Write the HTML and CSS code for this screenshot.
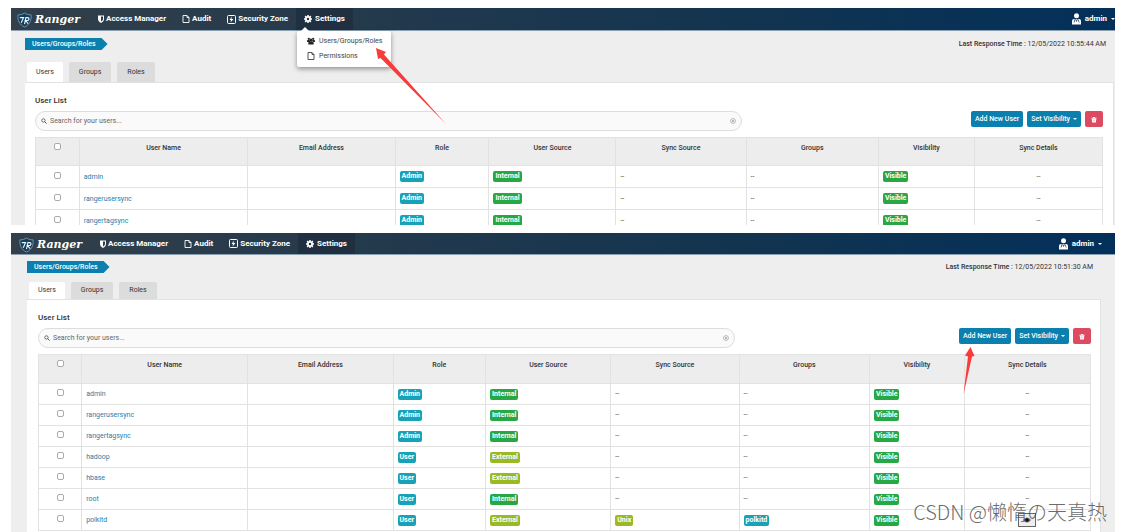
FILE: index.html
```html
<!DOCTYPE html>
<html lang="en">
<head>
<meta charset="utf-8">
<title>Ranger - Users/Groups/Roles</title>
<link rel="stylesheet" href="styles.css">
</head>
<body>
<svg class="sprite" aria-hidden="true">
  <symbol id="logo" viewBox="0 0 32 32">
    <path d="M16 1C12 4 7 5 2 5c-1 12 3 21 14 26C27 26 31 17 30 5c-5 0-10-1-14-4z" fill="#123f5e" stroke="#6f98b3" stroke-width="2"/>
    <path d="M6 11h8l-5 11M16 25l3-14h4c4 0 3 6-1 6h-4l6 7" fill="none" stroke="#eef4f8" stroke-width="2.4"/>
  </symbol>
  <symbol id="shield" viewBox="0 0 12 16">
    <path d="M0 1h12v7c0 4-3 6-6 8-3-2-6-4-6-8z" fill="#fff"/><path d="M6 3h4v5c0 2-2 4-4 5z" fill="#2c3d4b"/>
  </symbol>
  <symbol id="file" viewBox="0 0 16 16">
    <path d="M2 1h8l4 4v10H2zM10 1v4h4" fill="none" stroke="currentColor" stroke-width="1.8"/>
  </symbol>
  <symbol id="zone" viewBox="0 0 18 18">
    <rect x="1" y="1" width="16" height="16" rx="2" fill="none" stroke="#fff" stroke-width="2"/><path d="M10 3 5 10h3l-1 5 6-7h-4z" fill="#fff"/>
  </symbol>
  <symbol id="gear" viewBox="0 0 16 16">
    <circle cx="8" cy="8" r="4.2" fill="none" stroke="#fff" stroke-width="3.6"/>
    <path d="M8 0v3M8 13v3M0 8h3M13 8h3M2.3 2.3l2 2M11.7 11.7l2 2M2.3 13.7l2-2M11.7 4.3l2-2" stroke="#fff" stroke-width="3"/>
  </symbol>
  <symbol id="group" viewBox="0 0 18 16">
    <circle cx="4" cy="3" r="2.500"/><circle cx="14" cy="3" r="2.500"/><circle cx="9" cy="6" r="3.500"/>
    <path d="M0 10V7q0-1 2-1h4l1 4zM18 10V7q0-1-2-1h-4l-1 4zM3 16v-4q0-3 3-3h6q3 0 3 3v4z"/>
  </symbol>
  <symbol id="user" viewBox="0 0 18 24">
    <circle cx="9" cy="5.500" r="5" fill="#fff"/><path d="M0 23v-7q0-4 4-4h10q4 0 4 4v7z" fill="#fff"/>
    <path d="M5 13v3l-1 3M12.500 13l1 4 1 2M7 12l2 5 2-5" stroke="#0a3154" stroke-width="1.400" fill="none"/>
  </symbol>
  <symbol id="search" viewBox="0 0 16 16">
    <circle cx="6.500" cy="6.500" r="4.500" fill="none" stroke="#555" stroke-width="2.200"/><path d="m10 10 5 5" stroke="#555" stroke-width="2.600"/>
  </symbol>
  <symbol id="clear" viewBox="0 0 16 16">
    <circle cx="8" cy="8" r="6.500" fill="none" stroke="#999" stroke-width="1.800"/><path d="m5.500 5.500 5 5m0-5-5 5" stroke="#999" stroke-width="2"/>
  </symbol>
  <symbol id="trash" viewBox="0 0 16 16">
    <path d="M1 3h4l1-2h4l1 2h4v2H1zM2 6h12l-1 10H3z" fill="#fff"/><path d="M6 8v5M10 8v5" stroke="#dd4b62"/>
  </symbol>
  <symbol id="eye" viewBox="0 0 16 12">
    <path d="M0 6q8-10 16 0-8 10-16 0z" fill="#666"/><circle cx="8" cy="6" r="3.500" fill="#111"/>
  </symbol>
</svg>

<main class="page">
  <section class="shot shot-menu">
    <header class="nav">
      <a class="brand" href="#"><svg class="logo"><use href="#logo"/></svg>Ranger</a>
      <a class="nav-item" href="#"><svg class="i-shield"><use href="#shield"/></svg>Access Manager</a>
      <a class="nav-item" href="#"><svg class="i-nav"><use href="#file"/></svg>Audit</a>
      <a class="nav-item" href="#"><svg class="i-zone"><use href="#zone"/></svg>Security Zone</a>
      <div class="nav-drop">
        <button class="nav-item active" type="button"><svg class="i-nav"><use href="#gear"/></svg>Settings</button>
        <div class="menu">
          <a href="#"><svg class="i-menu"><use href="#group"/></svg>Users/Groups/Roles</a>
          <a href="#"><svg class="i-menu"><use href="#file"/></svg>Permissions</a>
          <svg class="arrow arrow-menu" viewBox="0 0 72 78"><path d="M1 1 11 5 9 7.500 71 77 5.500 11 3 12z" fill="#f93c3a"/></svg>
        </div>
      </div>
      <button class="account" type="button"><svg class="i-user"><use href="#user"/></svg>admin<span class="caret"></span></button>
    </header>
    <div class="content">
      <div class="topline">
        <a class="crumb" href="#">Users/Groups/Roles</a>
        <p class="stamp"><b>Last Response Time :</b> 12/05/2022 10:55:44 AM</p>
      </div>
      <nav class="tabs"><a class="tab current" href="#">Users</a><a class="tab" href="#">Groups</a><a class="tab" href="#">Roles</a></nav>
      <div class="panel">
        <h1>User List</h1>
        <div class="tools">
          <label class="search"><svg class="i-search"><use href="#search"/></svg><input type="text" placeholder="Search for your users..." aria-label="Search users"><svg class="i-search"><use href="#clear"/></svg></label>
          <div class="actions">
            <button class="btn" type="button">Add New User</button>
            <button class="btn" type="button">Set Visibility<span class="caret"></span></button>
            <button class="btn danger" type="button" aria-label="Delete"><svg class="i-trash"><use href="#trash"/></svg></button>
          </div>
        </div>
        <table>
          <colgroup><col class="c1"><col class="c2"><col class="c3"><col class="c4"><col class="c5"><col class="c6"><col class="c7"><col class="c8"><col class="c9"></colgroup>
          <thead><tr><th><input type="checkbox" aria-label="Select all"></th><th>User Name</th><th>Email Address</th><th>Role</th><th>User Source</th><th>Sync Source</th><th>Groups</th><th>Visibility</th><th>Sync Details</th></tr></thead>
          <tbody>
            <tr><td><input type="checkbox" aria-label="admin"></td><td><a href="#">admin</a></td><td></td><td><span class="badge info">Admin</span></td><td><span class="badge ok">Internal</span></td><td>--</td><td>--</td><td><span class="badge ok">Visible</span></td><td>--</td></tr>
            <tr><td><input type="checkbox" aria-label="rangerusersync"></td><td><a href="#">rangerusersync</a></td><td></td><td><span class="badge info">Admin</span></td><td><span class="badge ok">Internal</span></td><td>--</td><td>--</td><td><span class="badge ok">Visible</span></td><td>--</td></tr>
            <tr><td><input type="checkbox" aria-label="rangertagsync"></td><td><a href="#">rangertagsync</a></td><td></td><td><span class="badge info">Admin</span></td><td><span class="badge ok">Internal</span></td><td>--</td><td>--</td><td><span class="badge ok">Visible</span></td><td>--</td></tr>
          </tbody>
        </table>
      </div>
    </div>
  </section>

  <section class="shot shot-list">
    <header class="nav">
      <a class="brand" href="#"><svg class="logo"><use href="#logo"/></svg>Ranger</a>
      <a class="nav-item" href="#"><svg class="i-shield"><use href="#shield"/></svg>Access Manager</a>
      <a class="nav-item" href="#"><svg class="i-nav"><use href="#file"/></svg>Audit</a>
      <a class="nav-item" href="#"><svg class="i-zone"><use href="#zone"/></svg>Security Zone</a>
      <button class="nav-item active" type="button"><svg class="i-nav"><use href="#gear"/></svg>Settings</button>
      <button class="account" type="button"><svg class="i-user"><use href="#user"/></svg>admin<span class="caret"></span></button>
    </header>
    <div class="content">
      <div class="topline">
        <a class="crumb" href="#">Users/Groups/Roles</a>
        <p class="stamp"><b>Last Response Time :</b> 12/05/2022 10:51:30 AM</p>
      </div>
      <nav class="tabs"><a class="tab current" href="#">Users</a><a class="tab" href="#">Groups</a><a class="tab" href="#">Roles</a></nav>
      <div class="panel">
        <h1>User List</h1>
        <div class="tools">
          <label class="search"><svg class="i-search"><use href="#search"/></svg><input type="text" placeholder="Search for your users..." aria-label="Search users"><svg class="i-search"><use href="#clear"/></svg></label>
          <div class="actions">
            <button class="btn" type="button">Add New User</button>
            <button class="btn" type="button">Set Visibility<span class="caret"></span></button>
            <button class="btn danger" type="button" aria-label="Delete"><svg class="i-trash"><use href="#trash"/></svg></button>
            <svg class="arrow arrow-add" viewBox="0 0 12 48"><path d="M7.500 0 11.500 9 9 9.500.5 47.500 5 9.500 2 8.500z" fill="#f93c3a"/></svg>
          </div>
        </div>
        <table>
          <colgroup><col class="c1"><col class="c2"><col class="c3"><col class="c4"><col class="c5"><col class="c6"><col class="c7"><col class="c8"><col class="c9"></colgroup>
          <thead><tr><th><input type="checkbox" aria-label="Select all"></th><th>User Name</th><th>Email Address</th><th>Role</th><th>User Source</th><th>Sync Source</th><th>Groups</th><th>Visibility</th><th>Sync Details</th></tr></thead>
          <tbody>
            <tr><td><input type="checkbox" aria-label="admin"></td><td><a href="#">admin</a></td><td></td><td><span class="badge info">Admin</span></td><td><span class="badge ok">Internal</span></td><td>--</td><td>--</td><td><span class="badge ok">Visible</span></td><td>--</td></tr>
            <tr><td><input type="checkbox" aria-label="rangerusersync"></td><td><a href="#">rangerusersync</a></td><td></td><td><span class="badge info">Admin</span></td><td><span class="badge ok">Internal</span></td><td>--</td><td>--</td><td><span class="badge ok">Visible</span></td><td>--</td></tr>
            <tr><td><input type="checkbox" aria-label="rangertagsync"></td><td><a href="#">rangertagsync</a></td><td></td><td><span class="badge info">Admin</span></td><td><span class="badge ok">Internal</span></td><td>--</td><td>--</td><td><span class="badge ok">Visible</span></td><td>--</td></tr>
            <tr><td><input type="checkbox" aria-label="hadoop"></td><td><a href="#">hadoop</a></td><td></td><td><span class="badge info">User</span></td><td><span class="badge ext">External</span></td><td>--</td><td>--</td><td><span class="badge ok">Visible</span></td><td>--</td></tr>
            <tr><td><input type="checkbox" aria-label="hbase"></td><td><a href="#">hbase</a></td><td></td><td><span class="badge info">User</span></td><td><span class="badge ext">External</span></td><td>--</td><td>--</td><td><span class="badge ok">Visible</span></td><td>--</td></tr>
            <tr><td><input type="checkbox" aria-label="root"></td><td><a href="#">root</a></td><td></td><td><span class="badge info">User</span></td><td><span class="badge ok">Internal</span></td><td>--</td><td>--</td><td><span class="badge ok">Visible</span></td><td>--</td></tr>
            <tr><td><input type="checkbox" aria-label="polkitd"></td><td><a href="#">polkitd</a></td><td></td><td><span class="badge info">User</span></td><td><span class="badge ext">External</span></td><td><span class="badge ext">Unix</span></td><td><span class="badge info">polkitd</span></td><td><span class="badge ok">Visible</span></td><td><button class="view" type="button" aria-label="View details"><svg class="i-eye"><use href="#eye"/></svg></button></td></tr>
          </tbody>
        </table>
      </div>
    </div>
    <p class="watermark">CSDN @懒惰の天真热</p>
  </section>
</main>
</body>
</html>
```

FILE: styles.css
```css
* { box-sizing: border-box; }

body {
  margin: 0;
  background: #fff;
  color: #333;
  font: 7px/10px Roboto, "Noto Sans CJK SC", sans-serif;
}

a { color: inherit; text-decoration: none; }
h1, p { margin: 0; }
button { border: 0; background: none; font: inherit; color: inherit; }
svg { display: block; flex: none; }
.sprite { position: absolute; width: 0; height: 0; }

.page {
  display: grid;
  gap: 8px;
  padding: 8px 8px 0 11px;
  height: 100vh;
  overflow: hidden;
  grid-template-rows: auto 1fr;
}

.shot { position: relative; background: #eee; overflow: hidden; }
.shot-menu { max-height: 217px; }

/* navigation bar */
.nav {
  display: flex;
  height: 23px;
  padding-left: 6px;
  border-bottom: 1px solid #8a9fb0;
  background: linear-gradient(90deg, #333f49, #22394d 35%, #13344f 65%, #03305a);
  color: #fff;
  font-size: 8px;
  font-weight: 700;
}
.brand {
  display: flex;
  align-items: center;
  gap: 3px;
  width: 73px;
  padding-top: 2px;
  font: italic 700 11px/16px "DejaVu Serif", serif;
}
.logo { width: 15px; height: 16px; }
.nav-item {
  display: flex;
  align-items: center;
  gap: 2px;
  height: 22px;
  padding: 0 8px;
}
.active { gap: 3px; background: #203040; }
.nav-drop { position: relative; }
.i-shield { width: 6px; height: 8px; }
.i-nav { width: 8px; height: 8px; }
.i-zone { width: 9px; height: 9px; }
.account {
  display: flex;
  align-items: center;
  gap: 4px;
  margin-left: auto;
  padding: 0;
}
.i-user { width: 9px; height: 12px; }
.caret {
  width: 4px;
  border: 2px solid transparent;
  border-top-color: currentColor;
  border-bottom: 0;
}

.menu {
  position: absolute;
  z-index: 2;
  top: 23px;
  left: 1px;
  display: grid;
  gap: 5px;
  width: 94px;
  padding: 5px 10px 6px;
  border-radius: 2px;
  background: #fff;
  box-shadow: 0 2px 5px #0006;
  color: #444;
  font-weight: 400;
  font-size: 7px;
}
.menu::before {
  content: "";
  position: absolute;
  top: -4px;
  left: 4px;
  border: 4px solid transparent;
  border-top: 0;
  border-bottom-color: #fff;
}
.menu a { display: flex; align-items: center; gap: 4px; white-space: nowrap; }
.i-menu { width: 8px; height: 8px; fill: #222; }

.arrow { position: absolute; z-index: 3; }
.arrow-menu { top: 16px; left: 78px; width: 72px; height: 78px; }
.arrow-add { top: 19px; left: 4px; width: 12px; height: 48px; }

/* breadcrumb and time stamp */
.content { padding: 7px 1px 0 14px; }
.topline { display: flex; justify-content: space-between; align-items: center; }
.crumb {
  padding: 0 12px 0 7px;
  background: #0b7fad;
  clip-path: polygon(0 0, calc(100% - 6px) 0, 100% 50%, calc(100% - 6px) 100%, 0 100%);
  color: #fff;
  font-weight: 500;
  line-height: 12px;
}
.stamp { padding-right: 8px; }
.stamp b { font-weight: 500; }

.tabs { display: flex; gap: 6px; margin-top: 12px; padding-left: 2px; }
.tab {
  padding: 0 10px;
  border-radius: 2px 2px 0 0;
  background: #dcdcdc;
  line-height: 20px;
}
.current { padding: 0 9px; background: #fff; }

.panel {
  padding: 13px 10px 0 10px;
  border: solid #e2e2e2;
  border-width: 1px 1px 0 0;
  background: #fff;
}
h1 { font-size: 8px; font-weight: 500; line-height: 10px; }

.tools { display: flex; justify-content: space-between; margin: 5px 0 6px; }
.search {
  display: flex;
  align-items: center;
  gap: 3px;
  width: 66.2%;
  height: 20px;
  padding: 0 5px;
  border: 1px solid #ddd;
  border-radius: 10px;
  background: #fafafa;
}
.search input {
  flex: 1;
  min-width: 0;
  padding: 0;
  border: 0;
  outline: 0;
  background: none;
  color: #555;
  font: 7px/10px Roboto, sans-serif;
}
.search input::placeholder { color: #666; }
.i-search { width: 6px; height: 6px; }

.actions { position: relative; display: flex; gap: 4px; height: 16px; }
.btn {
  display: flex;
  align-items: center;
  gap: 3px;
  padding: 0 4px;
  border-radius: 2px;
  background: #0b7fad;
  color: #fff;
  font-weight: 500;
  white-space: nowrap;
}
.danger { padding: 0 6px; background: #dd4b62; }
.i-trash { width: 6px; height: 7px; }

/* user table */
table { width: 100%; border-collapse: collapse; table-layout: fixed; }
.c1 { width: 4.1%; }
.c2 { width: 15.8%; }
.c3 { width: 13.8%; }
.c4 { width: 8.8%; }
.c5 { width: 11.9%; }
.c6 { width: 12.2%; }
.c7 { width: 12.4%; }
.c8 { width: 9%; }
.c9 { width: 12%; }
th, td { border: 1px solid #e2e2e2; }
th {
  height: 28px;
  padding: 5px 0 0;
  background: #ededed;
  font-weight: 500;
  vertical-align: top;
}
td { height: 22px; padding: 0 4px; vertical-align: middle; color: #444; }
td a { color: #2480ac; }
td:first-child, td:last-child { text-align: center; }
td:first-child { padding-bottom: 3px; }
[type="checkbox"] {
  display: block;
  appearance: none;
  width: 7px;
  height: 7px;
  margin: 0 auto;
  border: 1px solid #aaa;
  border-radius: 2px;
  background: #fff;
}
.badge {
  display: block;
  width: fit-content;
  padding: 0 2px;
  border-radius: 2px;
  color: #fff;
  font-weight: 700;
  line-height: 11px;
}
.info { background: #17a2b8; }
.ok { background: #28a745; }
.ext { background: #9bb923; }
.view {
  display: block;
  margin: 0 auto;
  padding: 3px 4px;
  border: 1px solid #666;
  background: #eee;
}
.i-eye { width: 8px; height: 6px; }

/* second capture sits in a narrower window */
.shot-list .nav { height: 22px; padding: 0 13px 0 8px; }
.shot-list .nav-item { height: 21px; }
.shot-list .content { padding: 6px 14px 0 16px; }
.shot-list .tabs { margin-top: 9px; }
.shot-list .tab { line-height: 17px; }
.shot-list .panel { padding: 13px 9px 200px 11px; }
.shot-list th { height: 29px; }
.shot-list td { height: 21px; }

.watermark {
  position: absolute;
  right: 8px;
  bottom: 6px;
  color: #444c;
  font: 300 20px/28px "Noto Sans CJK SC", sans-serif;
  white-space: nowrap;
}
```
